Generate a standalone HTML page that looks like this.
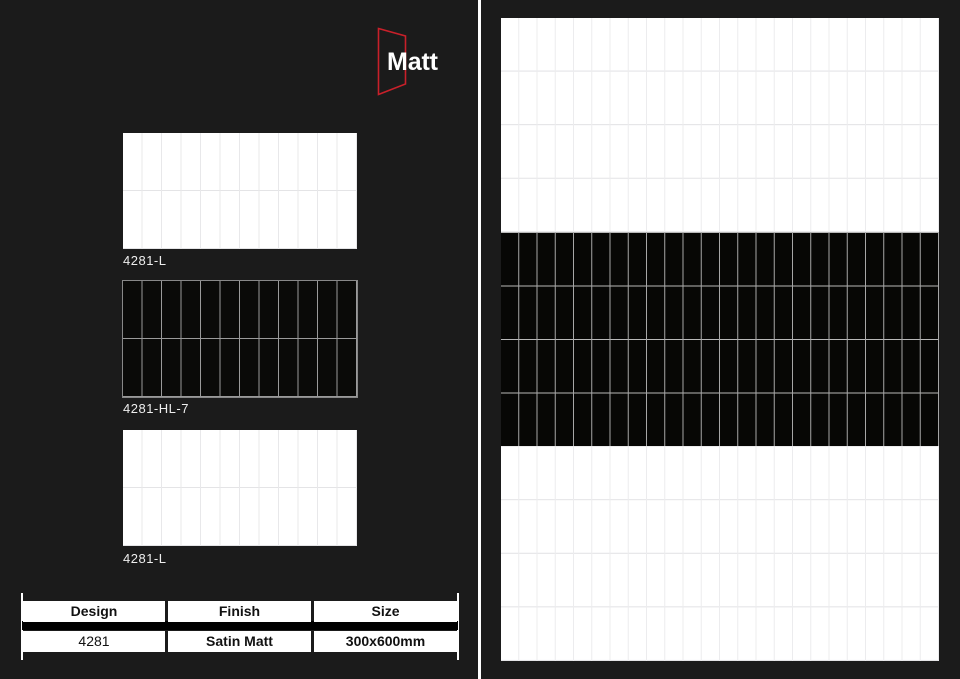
<!DOCTYPE html>
<html><head><style>
body{margin:0;width:960px;height:679px;background:#1b1b1b;position:relative;overflow:hidden;font-family:"Liberation Sans",sans-serif}
.p{position:absolute}
.tile{position:absolute;left:123px;width:234px;height:116px;background-color:#fff;
background-image:linear-gradient(to right,#e8e8ea 1px,transparent 1px),linear-gradient(to bottom,#e4e4e6 1px,transparent 1px);
background-size:19.5px 100%,100% 58px;background-position:-1px 0,0 -1px}
.tile.b{background-color:#0a0a08;background-image:linear-gradient(to right,#9a9a9a 1px,transparent 1px),linear-gradient(to bottom,#9a9a9a 1px,transparent 1px);outline:1px solid #888}
.lab{position:absolute;left:123px;color:#eee;font-size:13px;letter-spacing:.5px}
.cell{position:absolute;background:#fff;color:#111;font-size:14px;text-align:center;height:21px;line-height:21px;font-weight:bold}
</style></head><body>
<svg class="p" style="left:0;top:0" width="480" height="110">
<path d="M378.5 28.5 L405.5 36 L405.5 84 L378.5 94.5 Z" fill="none" stroke="#c8202a" stroke-width="1.6"/>
<text x="387" y="70" fill="#fff" font-family="Liberation Sans" font-weight="bold" font-size="25" textLength="51">Matt</text>
</svg>
<div class="tile" style="top:133px"></div>
<div class="lab" style="top:253px">4281-L</div>
<div class="tile b" style="top:281px"></div>
<div class="lab" style="top:401px">4281-HL-7</div>
<div class="tile" style="top:430px"></div>
<div class="lab" style="top:551px">4281-L</div>
<div class="p" style="left:21px;top:593px;width:2px;height:67px;background:#fff"></div>
<div class="p" style="left:457px;top:593px;width:2px;height:67px;background:#fff"></div>
<div class="p" style="left:22px;top:621px;width:436px;height:9px;background:#000"></div>
<div class="cell" style="left:23px;top:601px;width:142px">Design</div>
<div class="cell" style="left:168px;top:601px;width:143px">Finish</div>
<div class="cell" style="left:314px;top:601px;width:143px">Size</div>
<div class="cell" style="left:23px;top:631px;width:142px;font-weight:normal">4281</div>
<div class="cell" style="left:168px;top:631px;width:143px">Satin Matt</div>
<div class="cell" style="left:314px;top:631px;width:143px">300x600mm</div>
<div class="p" style="left:478px;top:0;width:3px;height:679px;background:#fff"></div>
<div class="p" style="left:501px;top:18px;width:438px;height:643px;background-color:#fff;
background-image:linear-gradient(to right,#ececee 1px,transparent 1px),linear-gradient(to bottom,#e2e2e4 1px,transparent 1px);background-size:18.25px 100%,100% 53.58px;background-position:-1px 0,0 -1px"></div>
<div class="p" style="left:501px;top:232px;width:438px;height:214px;background-color:#070705;
background-image:linear-gradient(to right,#a8a8a8 1px,transparent 1px),linear-gradient(to bottom,#b8b8b8 1px,transparent 1px);background-size:18.25px 100%,100% 53.5px;background-position:-1px 0,0 0"></div>
</body></html>
